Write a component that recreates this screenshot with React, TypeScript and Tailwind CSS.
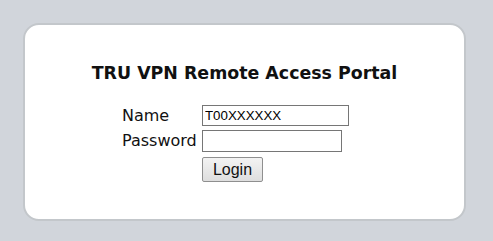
import React from "react";

export default function App() {
  return (
    <div className="w-[493px] h-[241px] bg-[#d1d5db] pt-[23px] pl-[23px]">
      <div className="w-[443px] h-[198px] bg-white border-2 border-[#c3c7cb] rounded-[16px] flex flex-col">
        <h1 className="mt-[38px] text-center text-[17.4px] font-bold text-[#111] leading-[20px] font-['DejaVu_Sans',sans-serif]">
          TRU VPN Remote Access Portal
        </h1>
        <div className="mt-[22px] ml-[97px] grid grid-cols-[80px_auto] gap-y-[4px] items-center font-['DejaVu_Sans',sans-serif] text-[16px] text-[#111]">
          <span className="leading-[21px]">Name</span>
          <input
            defaultValue="T00XXXXXX"
            className="w-[147px] h-[21px] border border-[#767676] px-[2px] text-[13.3px] font-['Liberation_Sans',sans-serif] text-black outline-none"
          />
          <span className="leading-[22px]">Password</span>
          <input
            type="password"
            className="w-[140px] h-[22px] border border-[#767676] px-[2px] text-[13.3px] font-['Liberation_Sans',sans-serif] outline-none"
          />
          <span />
          <button className="mt-[1px] w-[61px] h-[25px] border border-[#8f8f8f] bg-gradient-to-b from-[#f3f3f3] to-[#dedede] rounded-[2px] text-[16px] font-['Liberation_Sans',sans-serif] text-[#111] leading-none">
            Login
          </button>
        </div>
      </div>
    </div>
  );
}
